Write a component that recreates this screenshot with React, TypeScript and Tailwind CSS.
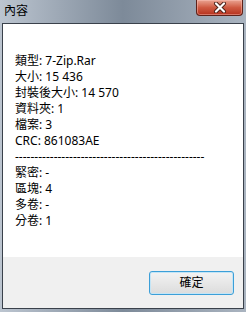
const font = { fontFamily: '"Noto Sans", "Noto Sans CJK TC", sans-serif' };

const lines = [
  "類型: 7-Zip.Rar",
  "大小: 15 436",
  "封裝後大小: 14 570",
  "資料夾: 1",
  "檔案: 3",
  "CRC: 861083AE",
  "-------------------------------------------------",
  "緊密: -",
  "區塊: 4",
  "多卷: -",
  "分卷: 1",
];

const CloseButton = () => (
  <div className="mr-[3px] flex h-[16px] w-[47px] items-center justify-center rounded-b-[4px] border border-t-0 border-[#5e2219] bg-gradient-to-b from-[#e9a392] via-[#cf5a42] to-[#b5301c] shadow-[inset_0_0_0_1px_rgba(255,200,190,0.45)]">
    <svg width="14" height="11" viewBox="0 0 14 11">
      <path d="M3 1.5 L11 9.5 M11 1.5 L3 9.5" stroke="#4a2018" strokeWidth="4" strokeLinecap="round" />
      <path d="M3 1.5 L11 9.5 M11 1.5 L3 9.5" stroke="#ffffff" strokeWidth="2.2" strokeLinecap="round" />
    </svg>
  </div>
);

export default function App() {
  return (
    <div
      className="flex h-[312px] w-[246px] flex-col bg-gradient-to-r from-[#bcc5d0] via-[#7d8a99] to-[#aab4c0]"
      style={font}
    >
      <div className="flex h-[23px] items-start justify-between">
        <span className="pl-[4px] pt-[3px] text-[12px] leading-[16px] text-black">內容</span>
        <CloseButton />
      </div>
      <div className="mx-[2px] mb-[3px] flex flex-1 flex-col border border-[#3a414b]">
        <div className="flex-1 bg-white pl-[12px] pt-[29px] text-[12px] leading-[16px] text-black">
          {lines.map((line, i) => (
            <div key={i} className="whitespace-nowrap">
              {line}
            </div>
          ))}
        </div>
        <div className="flex h-[51px] justify-end bg-[#f0f0f0] pr-[9px] pt-[14px]">
          <button className="flex h-[24px] w-[85px] items-center justify-center rounded-[3px] border border-[#3c9fd8] bg-gradient-to-b from-[#f3f3f3] to-[#dcdcdc] text-[12px] text-black shadow-[inset_0_0_0_1px_#c4e5f6]">
            確定
          </button>
        </div>
      </div>
    </div>
  );
}
